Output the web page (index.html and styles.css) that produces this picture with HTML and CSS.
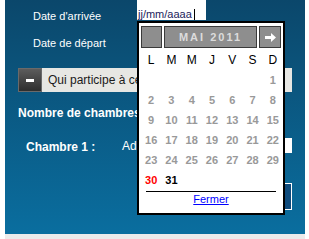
FILE: index.html
```html
<!doctype html>
<html lang="fr">
  <head>
    <meta charset="UTF-8" />
    <meta name="viewport" content="width=device-width, initial-scale=1.0" />
    <title>Réservation</title>
    <link rel="stylesheet" href="styles.css">
  </head>
  <body>
    <div class="page">
      <div class="panel">
        <!-- Dates -->
        <div class="top">
          <div class="date-row">
            <label>Date d'arrivée</label>
            <span class="date-input"><span class="spell">jj</span>/mm/aaaa<span class="caret"></span></span>
          </div>
          <div class="date-row second">
            <label>Date de départ</label>
          </div>

          <div class="section-bar">
            <span class="toggle"></span>
            <span>Qui participe à cette réservation ?</span>
          </div>
        </div>

        <!-- Chambres -->
        <div class="rooms-label">Nombre de chambres</div>
        <div class="room-row">
          <span class="room-name">Chambre 1 :</span>
          <span class="room-field-label">Adultes</span>
          <span class="room-field"></span>
        </div>
        <div class="btn-row">
          <span class="btn"></span>
        </div>

        <!-- Calendrier -->
        <div class="calendar">
          <div class="cal-head">
            <span class="cal-btn prev"></span>
            <span class="cal-btn month">MAI 2011</span>
            <span class="cal-btn next">
              <svg width="11" height="9" viewBox="0 0 11 9"><path d="M0 3h6V0l5 4.5-5 4.5V6H0z" fill="#fff"/></svg>
            </span>
          </div>
          <div class="cal-grid">
            <span class="dow">L</span><span class="dow">M</span><span class="dow">M</span><span class="dow">J</span><span class="dow">V</span><span class="dow">S</span><span class="dow">D</span>
            <span></span><span></span><span></span><span></span><span></span><span></span><span>1</span>
            <span>2</span><span>3</span><span>4</span><span>5</span><span>6</span><span>7</span><span>8</span>
            <span>9</span><span>10</span><span>11</span><span>12</span><span>13</span><span>14</span><span>15</span>
            <span>16</span><span>17</span><span>18</span><span>19</span><span>20</span><span>21</span><span>22</span>
            <span>23</span><span>24</span><span>25</span><span>26</span><span>27</span><span>28</span><span>29</span>
            <span class="today">30</span><span class="selected">31</span>
          </div>
          <div class="cal-foot"><a href="#">Fermer</a></div>
        </div>
      </div>
      <div class="footer-strip"></div>
    </div>
  </body>
</html>
```

FILE: styles.css
```css
/* General */
body {
  margin: 0;
  padding: 0;
  background: #fff;
  font-family: Arial, "Liberation Sans", sans-serif;
}

.page {
  width: 300px;
  margin-left: 5px;
}

.panel {
  position: relative;
  height: 234px;
  background: linear-gradient(#0b476b, #0a6e9f);
  color: #fff;
  font-size: 11px;
  overflow: hidden;
}

.footer-strip {
  height: 5px;
  background: #ebebeb;
}

/* Dates */
.top {
  margin-left: -5px;
  padding-left: 5px;
  height: 100px;
  background: linear-gradient(#0b476b, #0b5881);
}

.date-row {
  display: flex;
  align-items: flex-start;
  height: 20px;
}

.date-row label {
  box-sizing: border-box;
  width: 132px;
  padding-left: 28px;
  margin-top: 10px;
  line-height: 13px;
}

.date-row.second {
  margin-top: 17px;
}

.date-row.second label {
  margin-top: 0;
}

.date-input {
  width: 66px;
  height: 12px;
  padding: 8px 2px 0 1px;
  line-height: 12px;
  background: #fff;
  color: #1c1c5c;
}

.date-input .spell {
  text-decoration: underline;
}

.date-input .caret {
  display: inline-block;
  width: 1px;
  height: 11px;
  margin-left: 2px;
  vertical-align: -2px;
  background: #000;
}

/* Section */
.section-bar {
  display: flex;
  align-items: center;
  width: 274px;
  height: 24px;
  margin: 11px 0 0 13px;
  background: #e7e7e3;
  color: #1a1a1a;
  font-size: 12px;
  white-space: nowrap;
  overflow: hidden;
}

.toggle {
  flex: none;
  display: flex;
  align-items: center;
  justify-content: center;
  box-sizing: border-box;
  width: 24px;
  height: 24px;
  margin-right: 6px;
  border: 1px solid #6a6a6a;
  background: linear-gradient(#5c5c5c, #2e2e2e);
}

.toggle::before {
  content: "";
  width: 8px;
  height: 3px;
  background: #fff;
}

/* Rooms */
.rooms-label {
  margin-top: 6px;
  padding-left: 13px;
  font-size: 12px;
  font-weight: bold;
  line-height: 14px;
  white-space: nowrap;
}

.room-row {
  display: flex;
  align-items: flex-start;
  height: 15px;
  margin-top: 18px;
  padding-left: 21px;
}

.room-name {
  width: 96px;
  margin-top: 2px;
  font-size: 12px;
  font-weight: bold;
  line-height: 14px;
}

.room-field-label {
  margin-top: 1px;
  font-size: 12px;
  line-height: 14px;
}

.room-field {
  width: 62px;
  height: 15px;
  margin-left: auto;
  margin-right: 13px;
  background: #fff;
}

.btn-row {
  display: flex;
  justify-content: flex-end;
  margin-top: 30px;
  padding-right: 13px;
}

.btn {
  box-sizing: border-box;
  width: 80px;
  height: 27px;
  border: 1px solid #fff;
  background: #0f4b7c;
}

/* Calendar popup */
.calendar {
  position: absolute;
  top: 21px;
  left: 132px;
  width: 142px;
  padding: 3px 0 7px 2px;
  border: 2px solid #000;
  background: #fff;
  color: #000;
}

.cal-head {
  display: flex;
  gap: 2px;
  height: 22px;
}

.cal-btn {
  display: flex;
  align-items: center;
  justify-content: center;
  box-sizing: border-box;
  height: 22px;
  border: 1px solid #3a3a3a;
  background: #8e8e8e;
}

.cal-btn.prev {
  width: 21px;
}

.cal-btn.month {
  width: 93px;
  color: #dcdcdc;
  font-size: 11px;
  font-weight: bold;
  letter-spacing: 2px;
}

.cal-btn.next {
  width: 22px;
}

.cal-grid {
  display: grid;
  grid-template-columns: repeat(7, 1fr);
  grid-auto-rows: 20px;
  margin-top: 2px;
  line-height: 20px;
  text-align: center;
  font-size: 11px;
  font-weight: bold;
  color: #999;
}

.cal-grid .dow {
  color: #000;
  font-size: 12px;
  font-weight: normal;
}

.cal-grid .today {
  color: #f00;
}

.cal-grid .selected {
  color: #000;
}

.cal-foot {
  margin: 1px 7px 0 5px;
  border-top: 1px solid #000;
  line-height: 14px;
  text-align: center;
}

.cal-foot a {
  color: #00f;
  font-size: 11px;
}
```
